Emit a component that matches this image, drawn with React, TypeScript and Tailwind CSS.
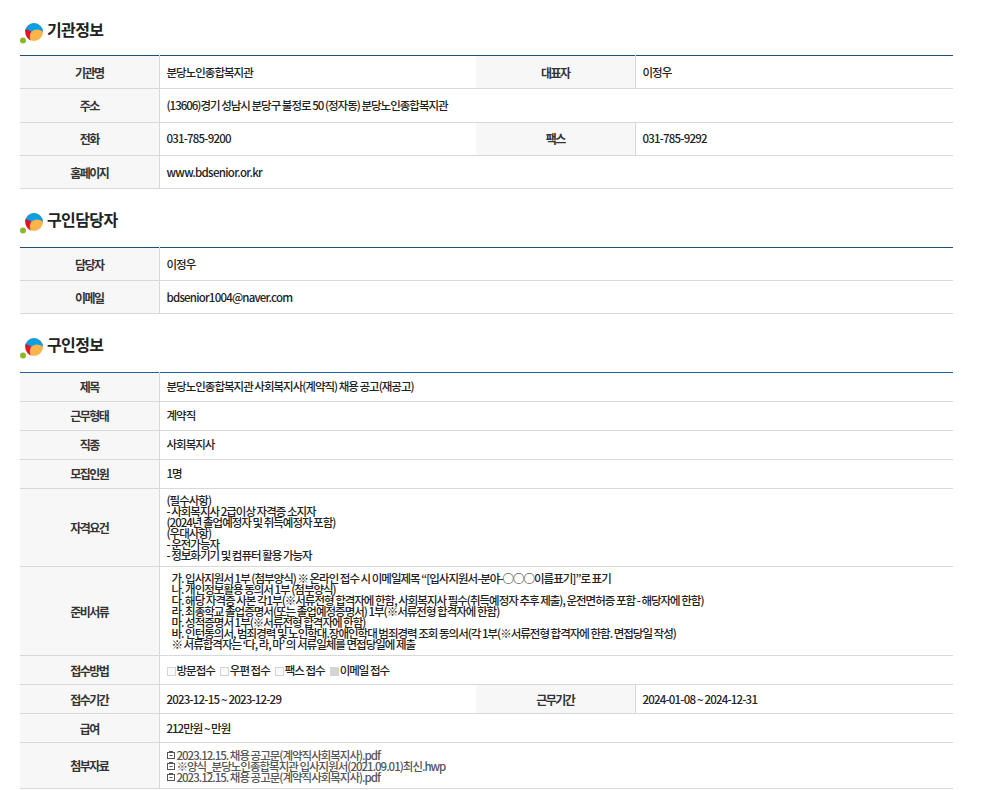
import React from 'react';

const font = '[font-family:"Noto_Sans_CJK_KR","Noto_Sans",sans-serif]';

function Logo() {
  return (
    <svg width="24" height="22" viewBox="0 0 24 22" className="mt-[4px] shrink-0">
      <circle cx="14" cy="10" r="9" fill="#f9b54c" />
      <path d="M5 10A9 9 0 0 1 23 10C18 6 13 7.5 10.5 11C9 9 7 9 5 10Z" fill="#0a9fe0" />
      <path d="M5.4 8C5 12 6.5 16 10.5 18.5C9.5 15 9.5 12.5 11 10C9.5 8 7 7 5.4 8Z" fill="#e3112c" />
      <circle cx="3" cy="18.5" r="3" fill="#8cb82b" />
    </svg>
  );
}

function Heading({ title }: { title: string }) {
  return (
    <div className="flex items-start gap-[3px] h-[24px]">
      <Logo />
      <h2 className="text-[16px] leading-[22px] font-bold text-[#222] tracking-[-0.6px]">{title}</h2>
    </div>
  );
}

const thClass = 'w-[139px] bg-[#f7f7f7] border-r border-b border-[#d8d8d8] text-center text-[12px] font-bold text-[#333] tracking-[-1.5px] align-middle';
const tdClass = 'border-b border-[#d8d8d8] pl-[7px] text-[11.5px] font-medium text-[#222] align-middle tracking-[-1px]';

function Row({ h, label, children, label2, value2, flush }: { h: string; label: string; children: React.ReactNode; label2?: string; value2?: React.ReactNode; flush?: boolean }) {
  const pad = flush ? '' : 'pt-px';
  return (
    <tr className={h}>
      <th className={`${thClass} ${pad}`}>{label}</th>
      {label2 ? (
        <>
          <td className={`${tdClass} ${pad}`}>{children}</td>
          <th className={`${thClass} ${pad}`}>{label2}</th>
          <td className={`${tdClass} ${pad}`}>{value2}</td>
        </>
      ) : (
        <td className={`${tdClass} ${pad}`} colSpan={3}>{children}</td>
      )}
    </tr>
  );
}

function Num({ children }: { children: React.ReactNode }) {
  return <span className="tracking-[-0.8px]">{children}</span>;
}

function InfoTable({ children, color }: { children: React.ReactNode; color: string }) {
  return (
    <table className={`w-full table-fixed border-collapse border-t ${color}`}>
      <colgroup>
        <col className="w-[139px]" />
        <col className="w-[317px]" />
        <col className="w-[159px]" />
        <col />
      </colgroup>
      <tbody>{children}</tbody>
    </table>
  );
}

function Check({ on }: { on?: boolean }) {
  return (
    <span className={`inline-block w-[9px] h-[9px] border border-[#d4d4d4] mr-[1px] align-[-1px] ${on ? 'bg-[#d4d4d4]' : 'bg-[#fafafa]'}`} />
  );
}

function FileLink({ name }: { name: string }) {
  return (
    <div className="flex items-center gap-[2px] text-[#555]">
      <svg width="8" height="8" viewBox="0 0 8 8" fill="none" stroke="#555" strokeWidth="1" className="shrink-0">
        <rect x="0.5" y="1.5" width="7" height="6" />
        <path d="M2 0.5H6M2.5 4.5H5.5" />
      </svg>
      <span>{name}</span>
    </div>
  );
}

const qualifications = [
  '(필수사항)',
  '- 사회복지사 2급이상 자격증 소지자',
  '(2024년 졸업예정자 및 취득예정자 포함)',
  '(우대사항)',
  '- 운전가능자',
  '- 정보화기기 및 컴퓨터 활용 가능자',
];

const documents = [
  '가. 입사지원서 1부 (첨부양식) ※ 온라인 접수 시 이메일제목 “[입사지원서-분야-○○○이름표기]”로 표기',
  '나. 개인정보활용 동의서 1부 (첨부양식)',
  '다. 해당 자격증 사본 각1부(※서류전형 합격자에 한함, 사회복지사 필수(취득예정자 추후 제출), 운전면허증 포함 - 해당자에 한함)',
  '라. 최종학교 졸업증명서(또는 졸업예정증명서) 1부(※서류전형 합격자에 한함)',
  '마. 성적증명서 1부(※서류전형 합격자에 한함)',
  '바. 인턴동의서, 범죄경력 및 노인학대.장애인학대 범죄경력 조회 동의서(각 1부(※서류전형 합격자에 한함. 면접당일 작성)',
  '※ 서류합격자는 ‘다, 라, 마’ 의 서류일체를 면접당일에 제출',
];

export default function App() {
  return (
    <div className={`w-[981px] h-[790px] overflow-hidden bg-white pl-[20px] pr-[28px] pt-[18px] ${font}`}>
      <Heading title="기관정보" />
      <div className="mt-[13px]">
        <InfoTable color="border-[#1f4e79]">
          <Row h="h-[33px]" label="기관명" label2="대표자" value2="이정우">분당노인종합복지관</Row>
          <Row h="h-[34px]" label="주소">(13606)경기 성남시 분당구 불정로 50 (정자동) 분당노인종합복지관</Row>
          <Row h="h-[33px]" flush label="전화" label2="팩스" value2={<Num>031-785-9292</Num>}><Num>031-785-9200</Num></Row>
          <Row h="h-[33px]" label="홈페이지"><span className="tracking-[-0.7px]">www.bdsenior.or.kr</span></Row>
        </InfoTable>
      </div>

      <div className="mt-[19px]">
        <Heading title="구인담당자" />
      </div>
      <div className="mt-[15px]">
        <InfoTable color="border-[#1f4e79]">
          <Row h="h-[33px]" label="담당자">이정우</Row>
          <Row h="h-[33px]" label="이메일"><span className="tracking-[-0.8px]">bdsenior1004@naver.com</span></Row>
        </InfoTable>
      </div>

      <div className="mt-[19px]">
        <Heading title="구인정보" />
      </div>
      <div className="mt-[15px]">
        <InfoTable color="border-[#1f5fa8]">
          <Row h="h-[29px]" flush label="제목">분당노인종합복지관 사회복지사(계약직) 채용 공고(재공고)</Row>
          <Row h="h-[29px]" flush label="근무형태">계약직</Row>
          <Row h="h-[29px]" flush label="직종">사회복지사</Row>
          <Row h="h-[29px]" flush label="모집인원">1명</Row>
          <Row h="h-[78px]" flush label="자격요건">
            <div className="leading-[11px]">
              {qualifications.map((line) => <div key={line}>{line}</div>)}
            </div>
          </Row>
          <Row h="h-[89px]" label="준비서류">
            <div className="leading-[11px] pl-[5px]">
              {documents.map((line) => <div key={line}>{line}</div>)}
            </div>
          </Row>
          <Row h="h-[29px]" label="접수방법">
            <span><Check />방문접수</span>
            <span className="ml-[5px]"><Check />우편 접수</span>
            <span className="ml-[5px]"><Check />팩스 접수</span>
            <span className="ml-[5px]"><Check on />이메일 접수</span>
          </Row>
          <Row h="h-[29px]" label="접수기간" label2="근무기간" value2={<Num>2024-01-08 ~ 2024-12-31</Num>}><Num>2023-12-15 ~ 2023-12-29</Num></Row>
          <Row h="h-[29px]" label="급여">212만원 ~ 만원</Row>
          <Row h="h-[46px]" label="첨부자료">
            <div className="leading-[11px]">
              <FileLink name="2023.12.15. 채용 공고문(계약직사회복지사).pdf" />
              <FileLink name="※양식_분당노인종합복지관 입사지원서(2021.09.01)최신.hwp" />
              <FileLink name="2023.12.15. 채용 공고문(계약직사회복지사).pdf" />
            </div>
          </Row>
        </InfoTable>
      </div>
    </div>
  );
}
